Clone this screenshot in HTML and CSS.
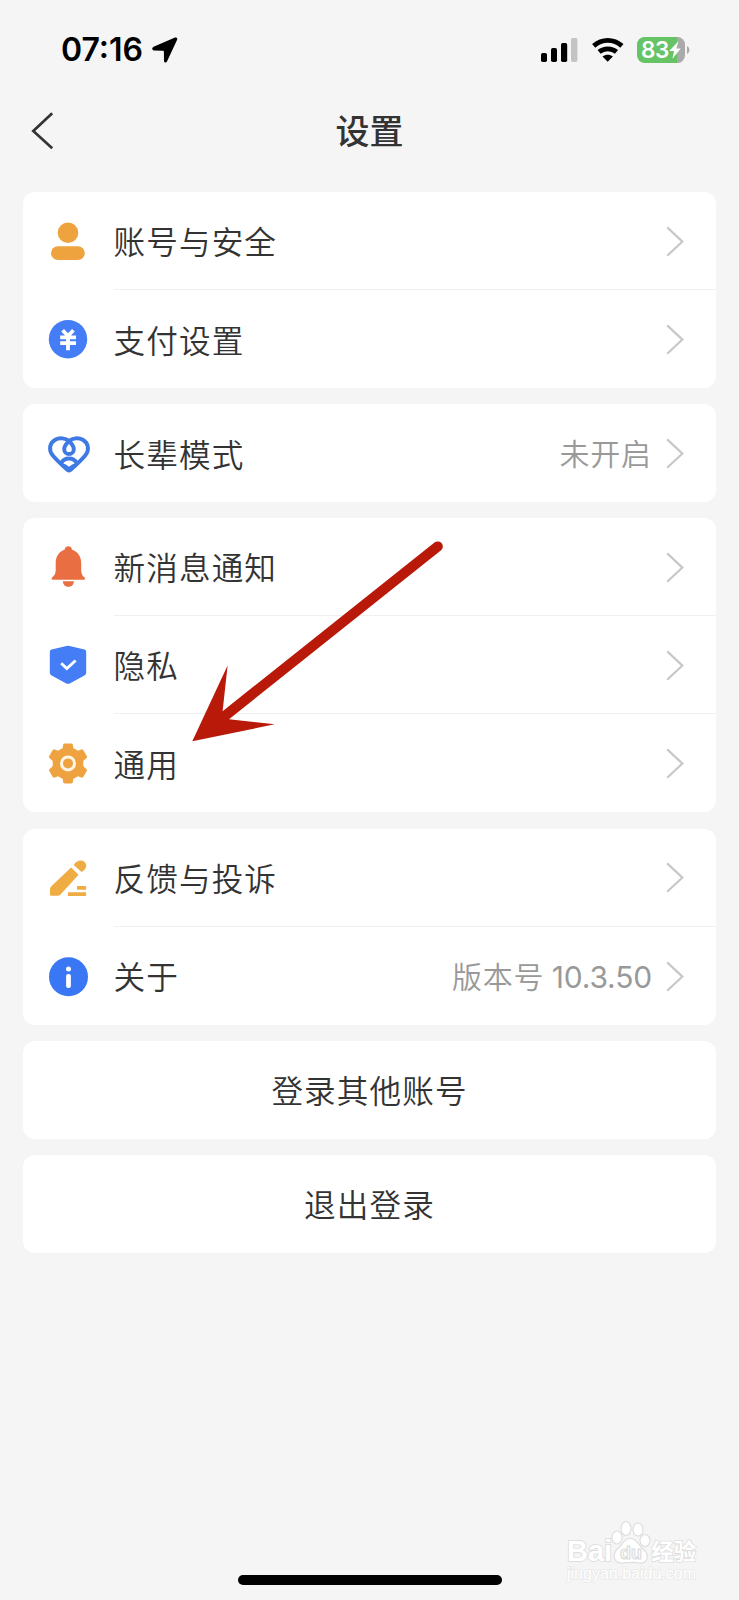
FILE: index.html
```html
<!DOCTYPE html>
<html lang="zh-CN">
<head>
<meta charset="utf-8">
<title>设置</title>
<link rel="stylesheet" href="styles.css">
</head>
<body>
<svg width="0" height="0" class="defs">
  <symbol id="chevron" viewBox="0 0 20 32"><path d="M2.2 2.4 17.4 16.6 2.2 30.8" fill="none" stroke="#c8c8c8" stroke-width="2.2"/></symbol>
</svg>
<div class="screen">
  <div class="status">
    <span class="time">07:16</span>
    <svg class="location" width="26" height="26" viewBox="0 0 26 26"><path d="M22.4.7 1.6 9.8C-.4 10.8-.2 13.3 2 13.4L11 13.7Q11.9 13.8 11.9 14.8L12 23.5C12 26 14.2 26.1 15.1 24.3L25 3C25.9 1 24.3-.1 22.4.7Z"/></svg>
    <span class="spacer"></span>
    <svg class="signal" width="38" height="26" viewBox="0 0 38 26"><rect x="1" y="16" width="6" height="9" rx="1.7"/><rect x="11" y="11" width="6" height="14" rx="1.7"/><rect x="21" y="6" width="6.2" height="19" rx="1.7"/><rect x="31" y="1" width="6.4" height="24" rx="1.7" fill="#c4c4c4"/></svg>
    <svg class="wifi" width="32" height="26" viewBox="0 0 32 26"><g fill="none" stroke="#000" stroke-width="4.8"><path d="M1.7 8.9C10 1.5 21.6 1.5 29.9 8.9"/><path d="M7.1 14.9C12.1 10.8 19.5 10.8 24.5 14.9"/></g><path d="M10.5 19.6C13.6 17 17.8 17 20.9 19.6L15.7 24.8Z"/></svg>
    <div class="battery"><span>83</span><svg width="12" height="18" viewBox="0 0 12 18"><path d="M9.4.2.2 9.9H5L3.4 17.8 11.8 7.5H7.4Z" fill="#fff"/></svg></div>
    <svg class="nub" width="3" height="8" viewBox="0 0 3 8"><path d="M0 0C3.2 1.4 3.2 6.6 0 8Z" fill="#aaa"/></svg>
  </div>
  <div class="header">
    <svg class="back" width="24" height="40" viewBox="0 0 24 40"><path d="M22.2 2.3 3.3 19.9 22.2 37.3" fill="none" stroke="#333" stroke-width="2.7"/></svg>
    <h1>设置</h1>
  </div>

  <div class="list">
    <section class="card">
      <div class="row">
        <svg class="icon" viewBox="0 0 48 48" fill="#efa33e"><circle cx="24" cy="15.8" r="10.3"/><rect x="7" y="29.2" width="33.8" height="13.8" rx="6.9"/></svg>
        <div class="cell"><span class="label">账号与安全</span><svg class="go"><use href="#chevron"/></svg></div>
      </div>
      <div class="row">
        <svg class="icon" viewBox="0 0 48 48"><circle cx="24" cy="24.2" r="19.2" fill="#447df5"/><path d="M18.6 15.2 24 21 29.4 15.2M16.2 22.4H32M16.2 28.2H32M24 21V35.2" fill="none" stroke="#fff" stroke-width="3.8"/></svg>
        <div class="cell"><span class="label">支付设置</span><svg class="go"><use href="#chevron"/></svg></div>
      </div>
    </section>

    <section class="card">
      <div class="row">
        <svg class="icon" viewBox="0 0 48 48" fill="none" stroke="#3f79e4" stroke-width="3.9" stroke-linejoin="round"><path d="M25 12C21.6 9 15.4 8.3 11.2 10.7C5.4 14.1 4.4 21 8.6 26.2C10.5 28.5 20 37.8 23.6 40.9Q25 42.1 26.4 40.9C30 37.8 39.5 28.5 41.4 26.2C45.6 21 44.6 14.1 38.8 10.7C34.6 8.3 28.4 9 25 12Z"/><path d="M25 12C22.2 14.6 20.2 17.4 20.2 20.2A4.8 4.8 0 0 0 29.8 20.2C29.8 17.4 27.8 14.6 25 12Z"/><path d="M17.2 34.2C20.2 28 29.8 28 32.8 34.2"/><path d="M17.5 35Q21.5 35.8 25 39Q28.5 35.8 32.5 35" stroke-width="2.2"/></svg>
        <div class="cell"><span class="label">长辈模式</span><span class="value">未开启</span><svg class="go"><use href="#chevron"/></svg></div>
      </div>
    </section>

    <section class="card">
      <div class="row">
        <svg class="icon" viewBox="0 0 48 48" fill="#e96f43"><path d="M20.6 6.8C21 2.2 27.6 2.2 28 6.8C33.9 8.6 37.2 13.6 37.2 20V27C37.2 30.8 38.3 32.7 40.6 34.6C41.5 36 40.9 36.8 39.8 36.8H8.9C7.7 36.8 7.2 35.8 8 34.6C10.4 32.6 11.7 30.8 11.7 27V20C11.7 13.6 14.9 8.6 20.6 6.8Z"/><path d="M18.8 38.2H30C29.5 41.6 27.9 43.7 24.4 43.7S19.3 41.6 18.8 38.2Z"/></svg>
        <div class="cell"><span class="label">新消息通知</span><svg class="go"><use href="#chevron"/></svg></div>
      </div>
      <div class="row">
        <svg class="icon" viewBox="0 0 48 48"><path d="M22.5 5Q24 4.5 25.5 5L40.4 8.4Q42.2 8.9 42.2 10.7V31.5Q42.2 33.5 40.4 34.5L25.7 42.4Q24 43.3 22.3 42.4L7.6 34.5Q5.8 33.5 5.8 31.5V10.7Q5.8 8.9 7.6 8.4Z" fill="#447df5"/><path d="M17.2 22.2 22.8 27.6 31.6 19.4" fill="none" stroke="#fff" stroke-width="2.8"/></svg>
        <div class="cell"><span class="label">隐私</span><svg class="go"><use href="#chevron"/></svg></div>
      </div>
      <div class="row">
        <svg class="icon" viewBox="0 0 48 48"><path d="M20.8 4.5H27.2Q28.7 4.5 28.9 5.9L29.4 9.2Q31.5 10 33.8 11.8L37.2 10.5Q38.6 10 39.4 11.3L42.8 17.1Q43.4 18.3 42.3 19.3L39.6 21.4Q38.8 24.5 39.6 27.6L42.3 29.9Q43.4 30.8 42.7 32.1L39.4 37.8Q38.6 39 37.3 38.5L33.8 37.2Q31.7 39 29.4 39.8L28.9 43Q28.7 44.4 27.2 44.4H20.8Q19.3 44.4 19.1 43L18.6 39.8Q16.3 39 14.2 37.2L10.7 38.5Q9.4 39 8.6 37.8L5.3 32.1Q4.6 30.8 5.7 29.9L8.4 27.6Q9.2 24.5 8.4 21.4L5.7 19.3Q4.6 18.3 5.2 17.1L8.6 11.3Q9.4 10 10.8 10.5L14.2 11.8Q16.5 10 18.6 9.2L19.1 5.9Q19.3 4.5 20.8 4.5Z" fill="#efa340"/><circle cx="24" cy="24.4" r="6.5" fill="none" stroke="#fff6e6" stroke-width="3"/></svg>
        <div class="cell"><span class="label">通用</span><svg class="go"><use href="#chevron"/></svg></div>
      </div>
    </section>

    <section class="card">
      <div class="row">
        <svg class="icon" viewBox="0 0 48 48" fill="#efac43"><path d="M27.1 13.4 34.6 20.7 16.5 40.4Q15.2 41.8 13.4 41.8H7.4Q6 41.8 6 40.4V35.2Q6 33.6 7.3 32.3Z"/><path d="M29.7 11.1C33 4.5 41.5 5.2 42.2 11.3C42.4 14.2 40.2 16.6 37.6 18.1Z"/><path d="M33 32H42.1V35.7H33ZM24 38.3H42.1V42H24Z"/></svg>
        <div class="cell"><span class="label">反馈与投诉</span><svg class="go"><use href="#chevron"/></svg></div>
      </div>
      <div class="row">
        <svg class="icon" viewBox="0 0 48 48"><circle cx="24.5" cy="24.7" r="19.5" fill="#3977f5"/><g fill="#fff"><circle cx="24.5" cy="17.1" r="2.5"/><rect x="22.1" y="22" width="4.8" height="14" rx="2"/></g></svg>
        <div class="cell"><span class="label">关于</span><span class="value">版本号 <span class="version">10.3.50</span></span><svg class="go"><use href="#chevron"/></svg></div>
      </div>
    </section>

    <section class="card action">登录其他账号</section>
    <section class="card action">退出登录</section>
  </div>

  <div class="watermark">
    <div class="brand"><span class="bai">Bai</span><svg class="paw" width="40" height="44" viewBox="0 0 40 44"><g fill="#fff" stroke="#dedede" stroke-width="1.2"><ellipse cx="6" cy="17.5" rx="5" ry="6.5"/><ellipse cx="15" cy="8.5" rx="5" ry="7"/><ellipse cx="27" cy="9.5" rx="5" ry="6.5"/><ellipse cx="34" cy="20.5" rx="5" ry="6"/><path d="M19 18.5C13 18.5 12 24.5 7 28.5C1 33.5 2 42.5 10 43C16 43.3 22 41.5 28 43C37 44.4 39 34.5 32 29C27 25 26 18.5 19 18.5Z"/></g><text x="9" y="39" class="du">du</text></svg><span class="jy">经验</span></div>
    <div class="url">jingyan.baidu.com</div>
  </div>
  <div class="home"></div>
  <svg class="pointer" width="260" height="210" viewBox="190 535 260 210" fill="#b91909"><path d="M192.3 741.3 227.6 665.5 222.6 711.2 434.8 542.3A5.1 5.1 0 0 1 441.1 550.3L229 719.2 274.8 724.3Z"/></svg>
</div>
</body>
</html>
```
FILE: styles.css
```css
* { box-sizing: border-box; }

body {
  margin: 0;
  background: #f5f5f5;
  color: #333;
  font-family: "Noto Sans CJK SC", sans-serif;
  font-weight: 350;
}

.defs { position: absolute; }

.screen {
  position: relative;
  width: 739px;
  height: 1600px;
  overflow: hidden;
  display: flex;
  flex-direction: column;
}

.status {
  display: flex;
  align-items: center;
  height: 98px;
  padding: 1px 49px 0 61px;
}

.time {
  width: 91px;
  color: #000;
  font: 600 32px/40px Inter, sans-serif;
  white-space: nowrap;
}

.spacer { flex: 1; }
.signal { margin-right: 14px; }
.wifi { margin-right: 13px; }

.battery {
  display: flex;
  align-items: center;
  width: 48px;
  height: 26px;
  padding-left: 4px;
  border-radius: 7.5px;
  background: linear-gradient(90deg, #66c466 40px, #aaa 40px);
  color: #fff;
  font: 600 22.5px/26px Inter, sans-serif;
  letter-spacing: -0.4px;
}

.nub { margin-left: 2px; }

.header {
  display: grid;
  grid-template-columns: 60px 1fr 60px;
  align-items: center;
  height: 66px;
  margin-bottom: 28px;
}

.back { margin-left: 30px; }

h1 {
  margin: 0;
  padding-bottom: 2px;
  font-size: 34px;
  font-weight: 500;
  line-height: 48px;
  text-align: center;
}

.list {
  display: flex;
  flex-direction: column;
  gap: 16.2px;
  padding: 0 22.6px;
}

.card {
  background: #fff;
  border-radius: 12px;
}

.row {
  display: flex;
  align-items: center;
  height: 98px;
  padding-left: 21.4px;
}

.icon {
  width: 48px;
  height: 48px;
  margin-right: 21.6px;
  flex: none;
}

.cell {
  display: flex;
  align-items: center;
  flex: 1;
  height: 100%;
  padding-right: 31px;
}

.row:not(:last-child) .cell { border-bottom: 1px solid #f0f0f0; }

.label {
  flex: 1;
  padding-bottom: 1px;
  font-size: 31.6px;
  letter-spacing: 1.1px;
}

.value {
  margin-right: 13.5px;
  padding-bottom: 2px;
  color: #999;
  font-size: 30px;
  letter-spacing: 0.8px;
}

.version {
  font-family: Inter, sans-serif;
  font-weight: 400;
  letter-spacing: -0.2px;
}

.go {
  width: 20px;
  height: 32px;
}

.action {
  height: 98px;
  font-size: 31.6px;
  line-height: 96px;
  letter-spacing: 1.1px;
  text-align: center;
}

.watermark {
  position: absolute;
  left: 567px;
  top: 1520px;
  color: #fff;
  font-family: "Liberation Sans", "Noto Sans CJK SC", sans-serif;
}

.brand {
  display: flex;
  align-items: flex-end;
  height: 44px;
}

.bai {
  font-size: 29px;
  font-weight: 700;
  line-height: 25px;
  -webkit-text-stroke: 1.8px #dedede;
  paint-order: stroke fill;
}

.paw { margin: 0 0 0 -1px; }

.du {
  fill: #fff;
  stroke: #dcdcdc;
  stroke-width: 1.2px;
  font: 700 18px "Liberation Sans", sans-serif;
}

.jy {
  font: 700 22.5px/27px "Noto Sans CJK SC", sans-serif;
  -webkit-text-stroke: 1.6px #dedede;
  paint-order: stroke fill;
}

.url {
  font-size: 16px;
  line-height: 20px;
  -webkit-text-stroke: 1.6px #e9e9e9;
  paint-order: stroke fill;
}

.home {
  position: absolute;
  left: 238px;
  top: 1575px;
  width: 264px;
  height: 10px;
  border-radius: 5px;
  background: #000;
}

.pointer {
  position: absolute;
  left: 190px;
  top: 535px;
}
```
